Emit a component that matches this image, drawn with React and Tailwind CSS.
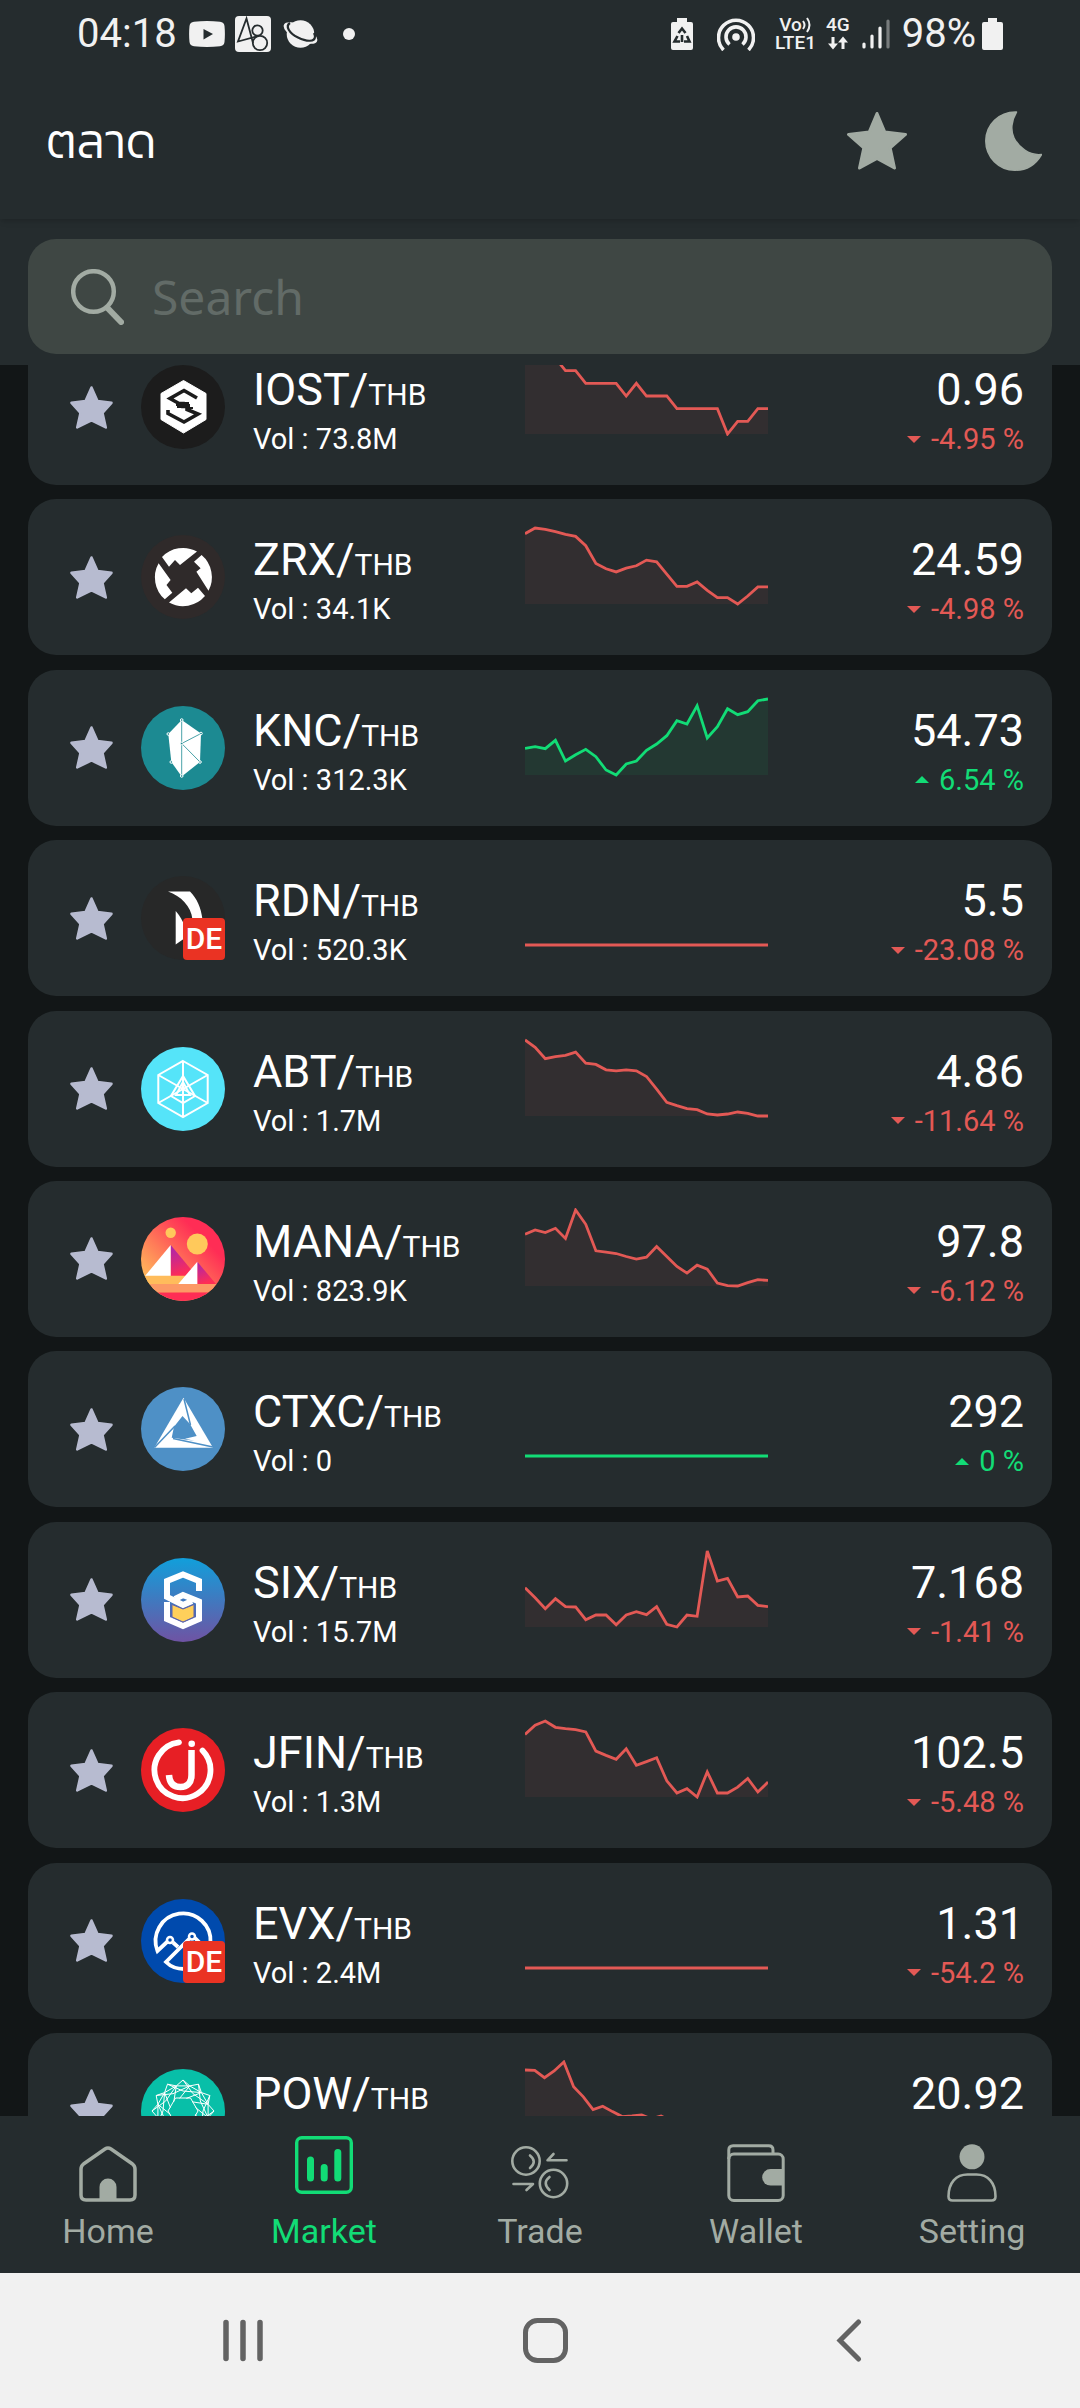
import React from 'react';
import clsx from 'clsx';

const COINS = [
    { symbol: 'IOST', vol: '73.8M', price: '0.96', change: '-4.95', points: [228, 228, 228, 228, 190, 190, 152, 152, 152, 152, 114, 152, 114, 114, 114, 76, 76, 76, 76, 76, 0, 38, 38, 76, 76] },
    { symbol: 'ZRX', vol: '34.1K', price: '24.59', change: '-4.98', points: [210, 227, 223, 216, 208, 202, 174, 121, 105, 96, 107, 114, 131, 126, 89, 53, 53, 66, 41, 19, 19, 0, 24, 51, 51] },
    { symbol: 'KNC', vol: '312.3K', price: '54.73', change: '6.54', points: [80, 85, 79, 104, 42, 61, 77, 55, 15, 0, 33, 42, 74, 93, 118, 163, 153, 208, 111, 145, 199, 181, 190, 223, 228] },
    { symbol: 'RDN', vol: '520.3K', price: '5.5', change: '-23.08', delisting: true, points: [0, 0] },
    { symbol: 'ABT', vol: '1.7M', price: '4.86', change: '-11.64', points: [227, 205, 171, 177, 181, 191, 158, 154, 138, 135, 138, 135, 118, 80, 41, 31, 22, 19, 6, 3, 6, 12, 8, 0, 0] },
    { symbol: 'MANA', vol: '823.9K', price: '97.8', change: '-6.12', points: [156, 169, 161, 174, 143, 229, 186, 106, 102, 98, 89, 81, 87, 119, 89, 59, 39, 63, 51, 9, 1, 0, 10, 19, 17] },
    { symbol: 'CTXC', vol: '0', price: '292', change: '0', points: [0, 0] },
    { symbol: 'SIX', vol: '15.7M', price: '7.168', change: '-1.41', points: [118, 88, 55, 85, 61, 60, 22, 36, 36, 7, 36, 46, 37, 61, 8, 0, 36, 32, 228, 138, 146, 90, 93, 65, 61] },
    { symbol: 'JFIN', vol: '1.3M', price: '102.5', change: '-5.48', points: [189, 217, 230, 211, 207, 204, 197, 139, 126, 114, 146, 96, 107, 119, 49, 12, 25, 0, 76, 12, 12, 30, 56, 15, 45] },
    { symbol: 'EVX', vol: '2.4M', price: '1.31', change: '-54.2', delisting: true, points: [0, 0] },
    { symbol: 'POW', vol: '3.2M', price: '20.92', change: '-7.35', points: [203, 202, 180, 200, 227, 153, 123, 85, 95, 79, 64, 66, 69, 57, 66, 50, 44, 38, 30, 34, 20, 12, 16, 5, 0, 8] },
];

const polar = (r, deg) => {
    const a = (deg * Math.PI) / 180;
    return `${(42 + r * Math.sin(a)).toFixed(1)},${(42 - r * Math.cos(a)).toFixed(1)}`;
};
const TWELVE = Array.from({ length: 12 }, (_, i) => i);

const LOGOS = {
    IOST: (
        <>
            <circle cx="42" cy="42" r="42" fill="#1c1c1c" />
            <path d="M42.5 15.5 65 28.500v26L42.500 68 20 54.500v-26z" fill="#fff" stroke="#fff" strokeLinejoin="round" />
            <path d="M56 33 43 25.500 29 33.500l9 5h4v3h4v3l11 4.500-14 8-16-8.500v-3.500" fill="none" stroke="#1c1c1c" strokeWidth="3.6" />
            <path d="M36 42h5v-4h6v5h5M36 37v3h12v5" fill="none" stroke="#1c1c1c" strokeWidth="2" />
        </>
    ),
    ZRX: (
        <>
            <circle cx="42" cy="42" r="42" fill="#2f2a2a" />
            <path
                d="M21 22A29 29 0 0 1 56 16.500L39 30l-5-5-6 6.700zM60.600 20A29 29 0 0 1 67.500 55.700L55.400 36.700l4.200-3.400-6.600-6.600zM64 61A29 29 0 0 1 28 67.500L45 53.300l5.300 5 6.700-5.600zM23.800 64.300A29 29 0 0 1 17.600 28.300L29.600 45l-4.100 5 5.800 7.700z"
                fill="#fff"
            />
        </>
    ),
    KNC: (
        <>
            <circle cx="42" cy="42" r="42" fill="#1c8a92" />
            <path d="M40.700 14 27.300 28l3 28 10.400 14.500L59 56l1-28.500z" fill="#fff" />
            <path d="M40.700 14v56M40.700 37.500 60 27.500M40.700 37.500 59 56" fill="none" stroke="#1c8a92" strokeWidth="0.800" />
            <g fill="#1c8a92" stroke="#fff" strokeWidth="1">
                <circle cx="40.700" cy="14" r="1.300" />
                <circle cx="27.300" cy="28" r="1.300" />
                <circle cx="30.300" cy="56" r="1.300" />
                <circle cx="59" cy="56" r="1.300" />
                <circle cx="60" cy="27.500" r="1.300" />
                <circle cx="40.700" cy="70" r="1.300" />
                <circle cx="40.700" cy="37.500" r="1.300" />
            </g>
        </>
    ),
    RDN: (
        <>
            <circle cx="42" cy="42" r="42" fill="#272828" />
            <path d="M27 15.500h22c7 7 11 16 12.500 28H51.500C50 30 40 20 27 15.500z" fill="#fff" />
            <path d="M34.700 35v33.500L44 62V51c-2-6-5-11-9.300-16z" fill="#fff" />
        </>
    ),
    ABT: (
        <>
            <circle cx="42" cy="42" r="42" fill="#55e4f9" />
            <g fill="none" stroke="#fff" strokeWidth="2">
                <path d="M42 14 66.700 28v28L42 70 17.300 56V28z" />
                <path d="M42 14v56M17.300 28 66.700 56M66.700 28 17.300 56" />
                <path d="M42 29 30 49l12 7 12-7z" />
                <path d="M42 35l-7 13h14z" />
            </g>
        </>
    ),
    MANA: (
        <>
            <defs>
                <linearGradient id="manaSky" x1="0.15" y1="0.85" x2="0.85" y2="0.15">
                    <stop offset="0" stopColor="#ffbc5b" />
                    <stop offset="0.850" stopColor="#ff2d55" />
                </linearGradient>
                <linearGradient id="manaHill" x1="0" y1="0" x2="0.3" y2="1">
                    <stop offset="0" stopColor="#a524b3" />
                    <stop offset="1" stopColor="#ff2d55" />
                </linearGradient>
                <clipPath id="manaClip">
                    <circle cx="42" cy="42" r="42" />
                </clipPath>
            </defs>
            <g clipPath="url(#manaClip)">
                <rect width="84" height="84" fill="url(#manaSky)" />
                <circle cx="29.700" cy="15.700" r="5.200" fill="#ffc95b" />
                <circle cx="56.300" cy="27" r="10.500" fill="#ffc95b" />
                <path d="M29.700 28v31H55.500z" fill="url(#manaHill)" />
                <path d="M29.700 28v31H4z" fill="#fff" />
                <path d="M0 58.700h45v9H0z" fill="#ffbc5b" />
                <path d="M56.300 44.700V67H75z" fill="url(#manaHill)" />
                <path d="M56.300 44.700V67h-19z" fill="#fff" />
                <path d="M0 67h84v8.500H0z" fill="#fc9965" />
                <path d="M0 75.500h84V84H0z" fill="#ff2d55" />
            </g>
        </>
    ),
    CTXC: (
        <>
            <circle cx="42" cy="42" r="42" fill="#4e90c6" />
            <path d="M42.500 10.700 72 60.700H13.300z" fill="#fff" />
            <path d="M41.500 29 49 37l6.700 12L44 51.700l9.500 2-22.800-3 2.300-11z" fill="#4e90c6" />
            <path d="M43 12l6.500 26M13.500 60.500 34 39M72 60 32 51.500" fill="none" stroke="#4e90c6" strokeWidth="1.500" />
        </>
    ),
    SIX: (
        <>
            <defs>
                <linearGradient id="sixBg" x1="0" y1="0" x2="0" y2="1">
                    <stop offset="0" stopColor="#119fdb" />
                    <stop offset="1" stopColor="#6f53a3" />
                </linearGradient>
            </defs>
            <circle cx="42" cy="42" r="42" fill="url(#sixBg)" />
            <g fill="none" stroke="#fff" strokeWidth="6">
                <path d="M58 33V23L42 16.500 26 23v16l16 8 9-4" />
                <path d="M34 41l8-4 16 6.500V61l-16 7-16-7V44" />
            </g>
            <path d="M31 46.500 42 51l11-4.500V59l-11 5-11-5z" fill="#ffd05b" stroke="#5c62ad" strokeWidth="1" />
        </>
    ),
    JFIN: (
        <>
            <circle cx="42" cy="42" r="42" fill="#e71f25" />
            <g fill="none" stroke="#fff">
                <path d="M38 14.300A28 28 0 1 0 61.500 22.500" strokeWidth="5.800" strokeLinecap="round" />
                <path d="M50.500 22v25c0 8-4.500 12-11 12-7 0-11-4-11.500-12" strokeWidth="6.500" />
            </g>
            <circle cx="50.700" cy="15.700" r="3.300" fill="#fff" />
        </>
    ),
    EVX: (
        <>
            <circle cx="42" cy="42" r="42" fill="#004aad" />
            <g fill="none" stroke="#fff" strokeWidth="3.800">
                <path d="M69.500 44A27.500 27.500 0 1 0 16.500 52L26.500 42.500" />
                <path d="M32 43.500l5 4.500M48.500 39.500 25 63c5 5 11 7 18 7M54 39l7 7" />
                <circle cx="29" cy="41" r="3" strokeWidth="2.500" />
                <circle cx="51" cy="37.500" r="3" strokeWidth="2.500" />
            </g>
        </>
    ),
    POW: (
        <>
            <circle cx="42" cy="42" r="42" fill="#08bfa8" />
            <g fill="none" stroke="#fff" strokeWidth="1">
                <polygon points={TWELVE.map((i) => `${polar(31, i * 30)} ${polar(26, i * 30 + 15)}`).join(' ')} />
                <polygon points={TWELVE.map((i) => polar(26, i * 30 + 15)).join(' ')} />
                {TWELVE.map((i) => (
                    <polyline key={i} points={`${polar(31, i * 30)} ${polar(20, i * 30 + 30)} ${polar(26, i * 30 + 75)} ${polar(13, i * 30 + 45)}`} />
                ))}
                <polygon points={[0, 1, 2, 3, 4, 5].map((i) => polar(15, i * 60 + 30)).join(' ')} />
            </g>
        </>
    ),
};

const StatusBar = () => (
    <div className="flex items-center justify-between px-[77px] pt-2.5 text-[#f1f1f1]">
        <div className="flex items-center">
            <span className="text-[40px] leading-[48px]">04:18</span>
            <svg className="ml-3 h-[26px] w-9" viewBox="0 0 36 26" aria-hidden="true">
                <path d="M5 .8Q18-.6 31 .8q4 .4 4.500 4.200.8 8 0 16-.5 3.800-4.500 4.200-13 1.400-26 0Q1 24.800.5 21q-.8-8 0-16Q1 1.200 5 .8z" fill="currentColor" />
                <path d="M14.500 8v10.500L24 13z" fill="#252c2e" />
            </svg>
            <svg className="ml-2.5 size-9" viewBox="0 0 36 36" aria-hidden="true">
                <rect width="36" height="36" rx="4" fill="currentColor" />
                <g fill="none" stroke="#252c2e" strokeWidth="1.800">
                    <path d="M18 27 11.500 2.500 3 25.500 21 20.500" />
                    <circle cx="22.500" cy="14.500" r="5.200" />
                    <circle cx="25" cy="27" r="7.200" />
                </g>
            </svg>
            <svg className="ml-3 h-[30px] w-9" viewBox="0 0 36 30" aria-hidden="true">
                <circle cx="17.500" cy="15" r="13.800" fill="currentColor" />
                <ellipse cx="17.500" cy="14" rx="18.500" ry="7.500" transform="rotate(27 17.500 14)" fill="currentColor" />
                <path d="M7 4C2 7 6 14 15 18.500s17 4.500 17-1c0-1.500-.5-2.500-1-3.500" fill="none" stroke="#252c2e" strokeWidth="2.200" />
            </svg>
            <span className="ml-6 size-3 rounded-full bg-[#f1f1f1]" />
        </div>
        <div className="flex items-center">
            <svg className="h-8 w-[22px]" viewBox="0 0 22 32" aria-hidden="true">
                <path d="M6 0h10v4h4q2 0 2 2v24q0 2-2 2H2q-2 0-2-2V6q0-2 2-2h4z" fill="currentColor" />
                <path d="M7.500 15 11 10.500l3.500 4.500M16 18l2.500 5.500H13M9 23.500H3.500L6.500 18M11 24v-7" fill="none" stroke="#252c2e" strokeWidth="2.600" />
            </svg>
            <svg className="ml-6 h-[34px] w-[38px]" viewBox="0 0 38 34" aria-hidden="true">
                <circle cx="19" cy="20" r="3.800" fill="currentColor" />
                <g fill="none" stroke="currentColor" strokeWidth="3.600">
                    <path d="M12.500 27.500a10 10 0 1 1 13 0" />
                    <path d="M6.500 33a17.500 17.500 0 1 1 25 0" />
                </g>
            </svg>
            <div className="ml-5 flex flex-col items-center text-[19px] leading-[18px] font-medium">
                <span className="flex items-center">
                    Vo
                    <svg className="h-4 w-2.5" viewBox="0 0 10 16" aria-hidden="true">
                        <path d="M1 4q3 4 0 8M5 1q5 7 0 14" fill="none" stroke="currentColor" strokeWidth="2" />
                    </svg>
                </span>
                <span>LTE1</span>
            </div>
            <div className="ml-2.5 flex flex-col items-center text-[19px] leading-[18px] font-medium">
                <span>4G</span>
                <svg className="h-[18px] w-[22px]" viewBox="0 0 22 16" aria-hidden="true">
                    <path d="M4.500 2h3v6.500H11l-5 6-5-6h3.500zM14.500 14h3V7.500H21l-5-6-5 6h3.500z" fill="currentColor" />
                </svg>
            </div>
            <svg className="ml-3 h-[30px] w-7" viewBox="0 0 28 30" aria-hidden="true">
                <g stroke="currentColor" strokeWidth="3.200" strokeLinecap="round">
                    <path d="M2 25v3M10 17v11M18 9v19" />
                    <path d="M26 2v26" opacity="0.400" />
                </g>
            </svg>
            <span className="ml-3 text-[40px] leading-[48px]">98%</span>
            <svg className="ml-1.5 h-8 w-[21px]" viewBox="0 0 21 32" aria-hidden="true">
                <path d="M6 0h9v4h4q2 0 2 2v24q0 2-2 2H2q-2 0-2-2V6q0-2 2-2h4z" fill="currentColor" />
            </svg>
        </div>
    </div>
);

const Header = () => (
    <header className="relative z-10 bg-[#252c2e] shadow-md">
        <StatusBar />
        <div className="flex items-center justify-between pt-[53px] pb-12 pl-[46px] pr-[38px]">
            <h1 className="font-['Kanit','Noto_Sans_Thai','Noto_Sans',sans-serif] text-[48px] leading-[60px] font-light text-white">ตลาด</h1>
            <div className="flex items-center gap-[78px] text-[#a2aba3]">
                <button type="button" aria-label="Favorites">
                    <svg className="h-[60px] w-[60px]" viewBox="0 0 60 60" fill="currentColor" stroke="currentColor" strokeWidth="3" strokeLinejoin="round">
                        <path d="M30 2.500 37.800 21 58.500 23.500 43.200 37 47.500 57 30 47.500 12.500 57 16.800 37 1.500 23.500 22.200 21z" />
                    </svg>
                </button>
                <button type="button" aria-label="Dark mode">
                    <svg className="h-[60px] w-[57px]" viewBox="0 0 57 60" fill="currentColor" stroke="currentColor" strokeWidth="1.500" strokeLinejoin="round">
                        <path d="M31.500 1C26 10 25.500 20 29 27c4.500 9 15 18 27.500 16.500C51 53 41.500 59.200 30 59.200 13.800 59.200.8 46 .8 30S13.800.5 31.500 1z" />
                    </svg>
                </button>
            </div>
        </div>
    </header>
);

const SearchBar = () => (
    <div className="bg-[#252c2e] px-7 pt-5 pb-[11px]">
        <label className="flex items-center gap-7 rounded-[28px] bg-[#3f4744] py-6 pl-[43px] pr-7 text-[#a2aba3]">
            <svg className="h-14 w-[53px] shrink-0" viewBox="0 0 53 56" fill="none" stroke="currentColor" strokeLinecap="round" aria-hidden="true">
                <circle cx="22.500" cy="22.500" r="20.300" strokeWidth="4.500" />
                <path d="M37 39.500 50 53" strokeWidth="6" />
            </svg>
            <input
                type="search"
                aria-label="Search"
                placeholder="Search"
                className="w-full min-w-0 bg-transparent font-['Noto_Sans',sans-serif] text-[48px] leading-[67px] text-white outline-none placeholder:text-[#626b67]"
            />
        </label>
    </div>
);

const Sparkline = ({ points, up }) => {
    const min = Math.min(...points);
    const range = Math.max(...points) - min || 1;
    const coords = points.map((p, i) => {
        const x = (i / (points.length - 1)) * 242;
        const y = 78 - ((p - min) / range) * 76;
        return `${x.toFixed(1)},${y.toFixed(1)}`;
    });

    return (
        <svg
            className={clsx('mt-[27px] h-20 w-[243px] shrink-0 self-start', up ? 'text-[#12dc76]' : 'text-[#e35955]')}
            viewBox="0 0 242 80"
            preserveAspectRatio="none"
            aria-hidden="true"
        >
            <polygon points={`0,78 ${coords.join(' ')} 242,78`} fill="currentColor" fillOpacity="0.07" />
            <polyline points={coords.join(' ')} fill="none" stroke="currentColor" strokeWidth="2.800" />
        </svg>
    );
};

const CoinLogo = ({ symbol, delisting }) => (
    <div className="relative ml-7 size-[84px] shrink-0">
        <svg className="size-full" viewBox="0 0 84 84" aria-hidden="true">
            {LOGOS[symbol]}
        </svg>
        {delisting && (
            <span className="absolute right-0 bottom-0 flex size-[42px] items-center justify-center rounded bg-[#ea3323] text-[30px] leading-none font-medium text-white">
                DE
            </span>
        )}
    </div>
);

const CoinCard = ({ coin }) => {
    const up = !coin.change.startsWith('-');

    return (
        <li className="flex h-[156px] shrink-0 items-center rounded-[28px] bg-[#252c2e] pl-[42px] pr-7 text-white">
            <button type="button" aria-label={`Add ${coin.symbol} to favorites`} className="shrink-0 text-[#b7bbd0]">
                <svg className="size-[43px]" viewBox="0 0 43 43" fill="currentColor" stroke="currentColor" strokeWidth="2.500" strokeLinejoin="round">
                    <path d="M21.500 1.500 27.500 15 41.500 16.800 32.500 26.800 35.800 41.500 21.500 34.500 7.200 41.500 10.500 26.800 1.500 16.800 15.500 15z" />
                </svg>
            </button>
            <CoinLogo symbol={coin.symbol} delisting={coin.delisting} />
            <div className="ml-7 min-w-0 flex-1 pt-2 whitespace-nowrap">
                <div className="text-[45px] leading-[56px]">
                    {coin.symbol}/<span className="text-[30px] leading-none">THB</span>
                </div>
                <div className="text-[29px] leading-[42px]">Vol : {coin.vol}</div>
            </div>
            <Sparkline points={coin.points} up={up} />
            <div className="flex w-64 shrink-0 flex-col items-end pt-2">
                <div className="text-[45px] leading-[56px]">{coin.price}</div>
                <div className={clsx('flex items-center gap-2.5 text-[29px] leading-[42px]', up ? 'text-[#12dc76]' : 'text-[#e35955]')}>
                    <svg className={clsx('h-[7px] w-3.5', up && 'rotate-180')} viewBox="0 0 14 7" aria-hidden="true">
                        <path d="M0 0h14L7 7z" fill="currentColor" />
                    </svg>
                    {coin.change} %
                </div>
            </div>
        </li>
    );
};

const TABS = [
    {
        name: 'Home',
        icon: (
            <svg className="h-14 w-[58px]" viewBox="0 0 58 56" fill="none" stroke="currentColor" strokeWidth="3.500">
                <path d="M2 23q0-3 2.500-5L26 3q3-2 6 0l21.500 15q2.500 2 2.500 5v26q0 5-5 5H7q-5 0-5-5z" />
                <path d="M20.500 54V41a8.500 8.500 0 0 1 17 0v13z" fill="currentColor" stroke="none" />
            </svg>
        ),
    },
    {
        name: 'Market',
        active: true,
        icon: (
            <svg className="size-[58px]" viewBox="0 0 58 58" fill="none" stroke="currentColor">
                <rect x="1.700" y="1.700" width="54.600" height="54.600" rx="5" strokeWidth="3.400" />
                <path d="M15.500 24v18M29.200 31.500V42M42.800 16.500V42" strokeWidth="7" strokeLinecap="round" />
            </svg>
        ),
    },
    {
        name: 'Trade',
        icon: (
            <svg className="h-14 w-[58px]" viewBox="0 0 58 56" fill="none" stroke="currentColor" strokeWidth="2.600" strokeLinecap="round" strokeLinejoin="round">
                <circle cx="15" cy="15" r="13.700" />
                <path d="M19 9.500q7.500 6 0 12.500" />
                <path d="M2.500 38H22l-6.500 6" />
                <circle cx="42.500" cy="37.500" r="13.700" />
                <path d="M38.500 31q-7.500 6 0 13" />
                <path d="M55.500 14.300H36.500L42.500 8" />
            </svg>
        ),
    },
    {
        name: 'Wallet',
        icon: (
            <svg className="size-[58px]" viewBox="0 0 58 58" fill="none" stroke="currentColor" strokeWidth="3">
                <rect x="1.800" y="10" width="54.400" height="46.500" rx="5" />
                <path d="M1.800 15V6q0-4.300 4.300-4.300h35.600Q46 1.700 46 6v4" />
                <path d="M57 25H43.500a8.300 8.300 0 0 0 0 16.600H57z" fill="currentColor" stroke="none" />
            </svg>
        ),
    },
    {
        name: 'Setting',
        icon: (
            <svg className="h-[58px] w-[50px]" viewBox="0 0 50 58" fill="none" stroke="currentColor" strokeWidth="2.600">
                <circle cx="25" cy="12.800" r="12.500" fill="currentColor" stroke="none" />
                <path d="M1.500 52.500C1.500 39 9 30.500 20.500 30.500h9C41 30.500 48.500 39 48.500 52.500q0 4-4 4h-39q-4 0-4-4z" />
            </svg>
        ),
    },
];

const TabBar = () => (
    <nav className="grid grid-cols-5 bg-[#252c2e] pt-5 pb-[22px]">
        {TABS.map((tab) => (
            <a key={tab.name} href="#" className={clsx('flex flex-col items-center gap-[9px]', tab.active ? 'text-[#12dc76]' : 'text-[#a2aba3]')}>
                <span className={clsx('flex h-[66px]', tab.active ? 'items-start' : 'items-end')}>{tab.icon}</span>
                <span className="text-[34px] leading-10">{tab.name}</span>
            </a>
        ))}
    </nav>
);

const SystemBar = () => (
    <div className="grid grid-cols-3 justify-items-center bg-[#f1f1f1] py-[45px] pl-[92px] pr-20 text-[#636363]">
        <button type="button" aria-label="Recent apps">
            <svg className="h-[45px] w-10" viewBox="0 0 40 45" stroke="currentColor" strokeWidth="5.500" strokeLinecap="round">
                <path d="M3 4.500v36M20 4.500v36M37 4.500v36" />
            </svg>
        </button>
        <button type="button" aria-label="Home screen">
            <svg className="size-[45px]" viewBox="0 0 45 45" fill="none" stroke="currentColor" strokeWidth="5">
                <rect x="2.500" y="2.500" width="40" height="40" rx="12" />
            </svg>
        </button>
        <button type="button" aria-label="Back">
            <svg className="h-[45px] w-[26px]" viewBox="0 0 26 45" fill="none" stroke="currentColor" strokeWidth="5" strokeLinecap="round">
                <path d="M22.500 4 4 22.500 22.500 41" />
            </svg>
        </button>
    </div>
);

export default function App() {
    return (
        <div className="flex min-h-screen flex-col bg-[#121617] font-['Roboto',sans-serif]">
            <Header />
            <SearchBar />
            {/* list is scrolled, so the first and last cards are cut by the bars */}
            <main className="flex grow flex-col overflow-hidden px-7">
                <ul className="-mt-9 -mb-[73px] flex grow flex-col justify-between gap-3.5">
                    {COINS.map((coin) => (
                        <CoinCard key={coin.symbol} coin={coin} />
                    ))}
                </ul>
            </main>
            <TabBar />
            <SystemBar />
        </div>
    );
}
